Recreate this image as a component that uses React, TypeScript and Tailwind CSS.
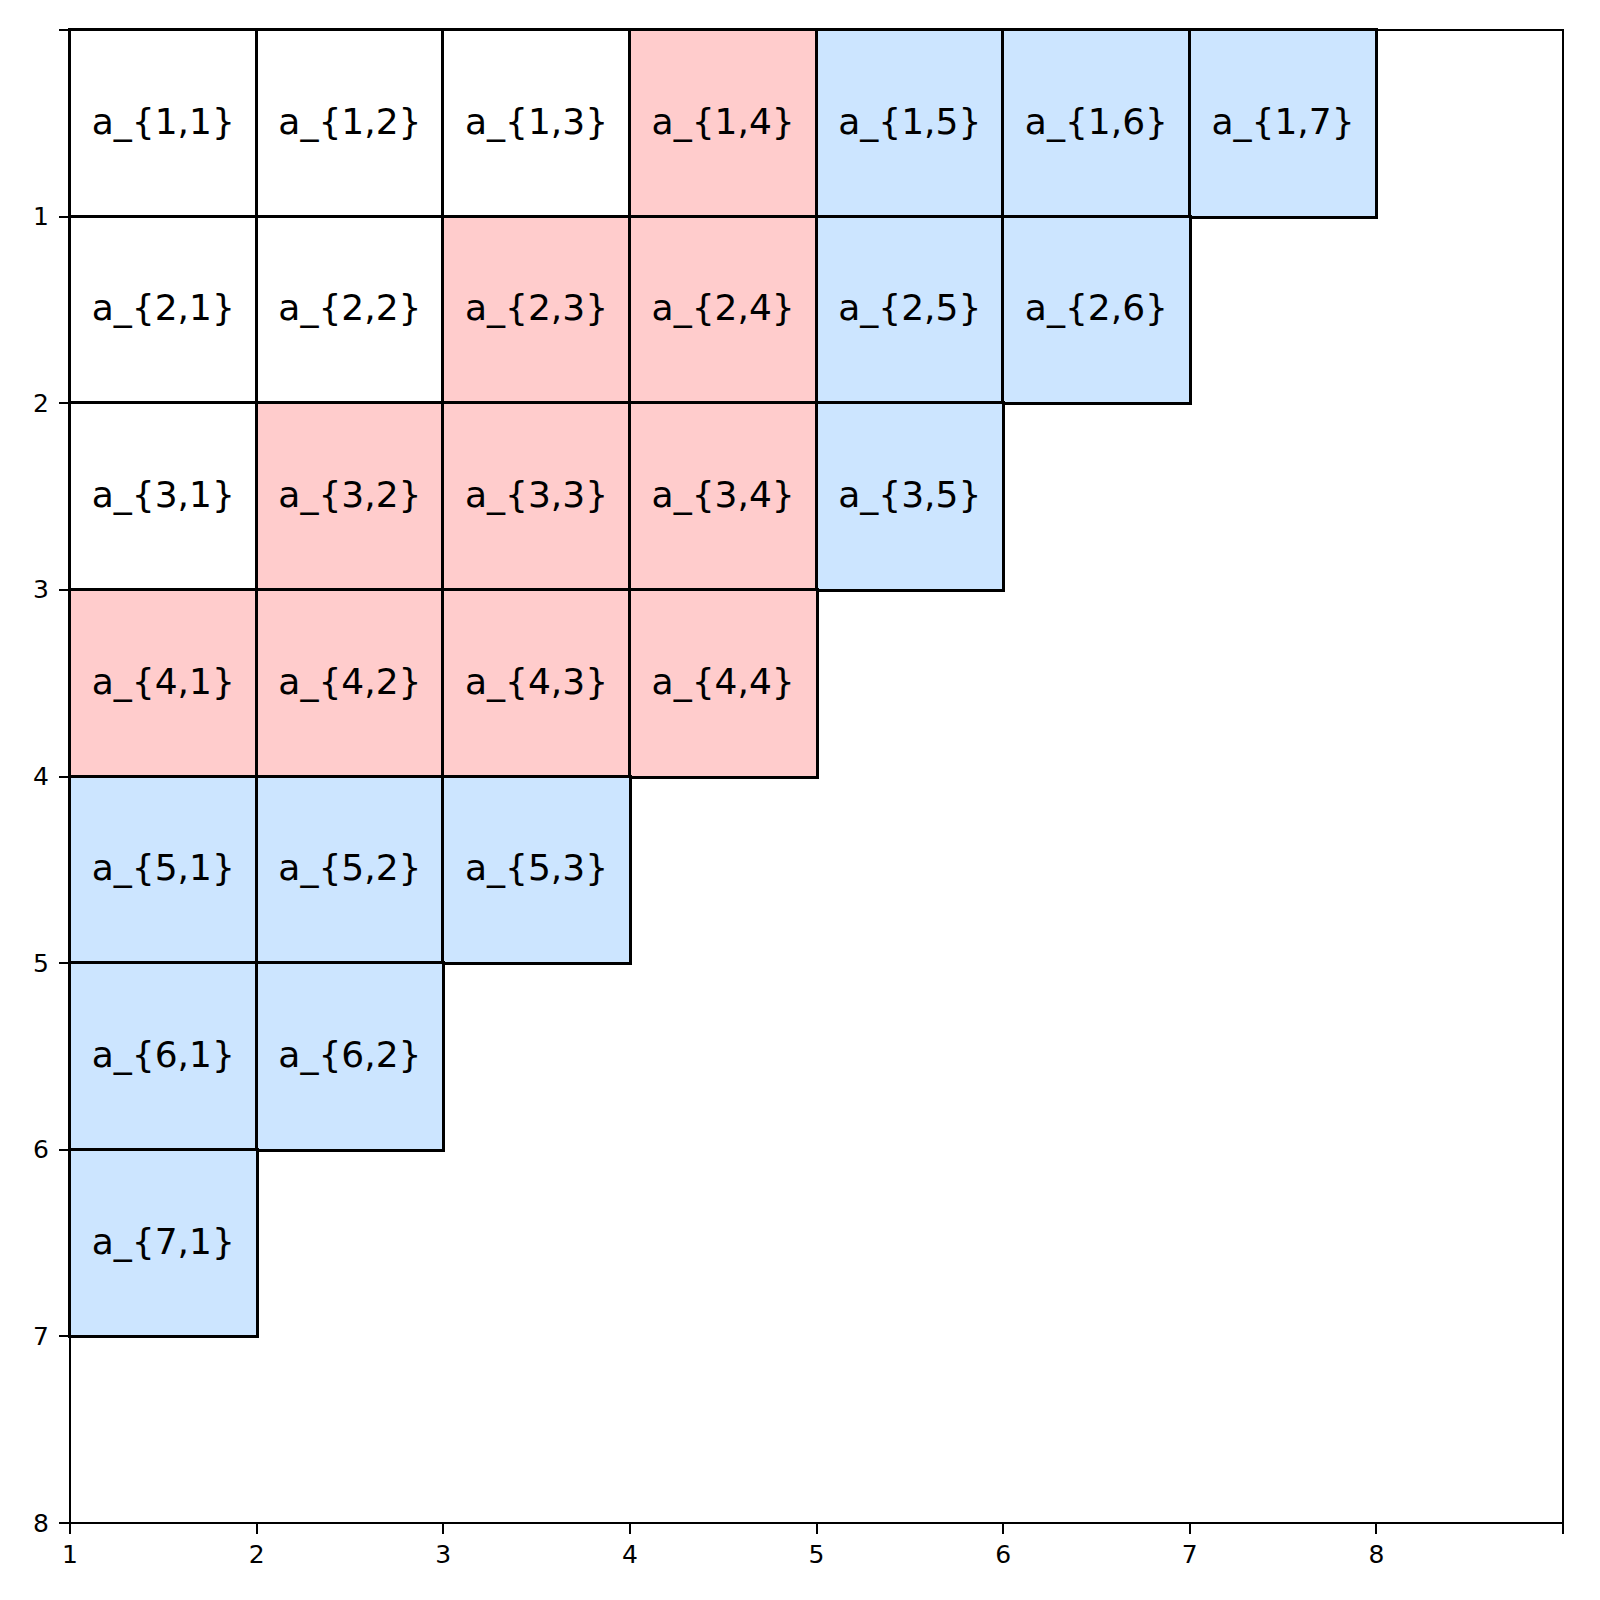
const CELL = "186.625px";
const ROWS = 8;
const COLS = 8;

// colour of a cell from its (row, col) index, 1-based
function cellTone(i: number, j: number) {
  if (i >= 5 || j >= 5) return "bg-[#cce5ff]";
  if (i + j >= 5) return "bg-[#ffcccc]";
  return "bg-white";
}

function Cell({ i, j }: { i: number; j: number }) {
  if (i + j > 8) return <div />;
  return (
    <div
      className={`${cellTone(i, j)} flex items-center justify-center pb-[3px] outline-[3px] outline-solid outline-black -outline-offset-[1.5px] text-[36px] text-black`}
    >
      a_{"{"}
      {i},{j}
      {"}"}
    </div>
  );
}

export default function App() {
  const cells = [];
  for (let i = 1; i <= ROWS; i++) {
    for (let j = 1; j <= COLS; j++) {
      cells.push(<Cell key={`${i}-${j}`} i={i} j={j} />);
    }
  }
  const yTicks = ["", "1", "2", "3", "4", "5", "6", "7", "8"];
  const xTicks = ["1", "2", "3", "4", "5", "6", "7", "8", ""];

  return (
    <div
      className="w-[1600px] h-[1600px] bg-white pt-[29px] text-black"
      style={{ fontFamily: '"DejaVu Sans", "Liberation Sans", sans-serif' }}
    >
      <div className="flex">
        {/* Y axis */}
        <div className="w-[69px] h-[1493px] mt-px flex flex-col justify-between">
          {yTicks.map((t, k) => (
            <div key={k} className="h-0 flex items-center justify-end">
              <span className="text-[25px] leading-none mr-[10px]">{t}</span>
              <div className="w-[10px] h-[2px] bg-black" />
            </div>
          ))}
        </div>

        {/* Plot area */}
        <div className="w-[1495px] h-[1495px] border-2 border-black relative">
          <div
            className="-m-px w-[1493px] h-[1493px] grid"
            style={{
              gridTemplateColumns: `repeat(${COLS}, ${CELL})`,
              gridTemplateRows: `repeat(${ROWS}, ${CELL})`,
            }}
          >
            {cells}
          </div>
          <div className="absolute -inset-[2px] border-2 border-black pointer-events-none" />
        </div>
      </div>

      {/* X axis */}
      <div className="ml-[70px] w-[1493px] flex justify-between">
        {xTicks.map((t, k) => (
          <div key={k} className="w-0 flex flex-col items-center">
            <div className="w-[2px] h-[10px] bg-black shrink-0" />
            <span className="text-[25px] leading-none mt-[8px] whitespace-nowrap">{t}</span>
          </div>
        ))}
      </div>
    </div>
  );
}
